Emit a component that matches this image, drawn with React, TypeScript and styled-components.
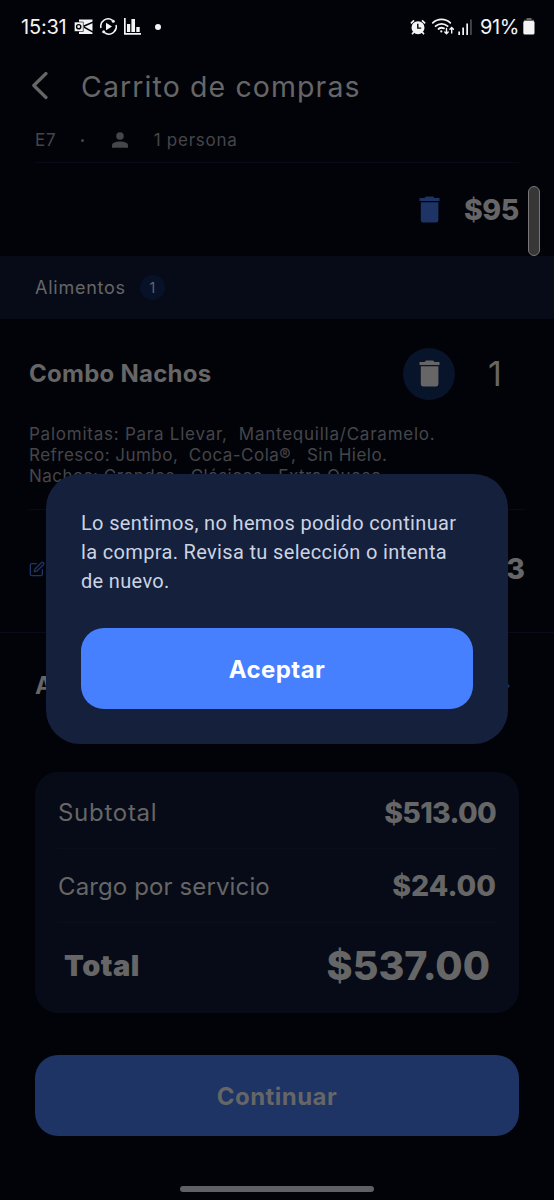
import React from 'react';
import styled, { createGlobalStyle } from 'styled-components';
import { FiEdit } from 'react-icons/fi';

const Global = createGlobalStyle`
  * { box-sizing: border-box; }
  body { margin: 0; background: #020309; overflow: hidden; }
  p, h1, h2 { margin: 0; font-weight: inherit; }
  button { border: 0; padding: 0; background: none; }
`;

const Screen = styled.div`
  position: relative;
  display: flex;
  flex-direction: column;
  width: 554px;
  height: 1200px;
  overflow: hidden;
  background: #020309;
  color: #666;
  font-family: Inter, sans-serif;
`;

const Text = styled.span<{
  $size: number;
  $weight?: number;
  $track?: number;
  $color?: string;
  $family?: string;
  $top?: number;
  $bottom?: number;
}>`
  flex: none;
  padding: ${(p) => p.$top ?? 0}px 0 ${(p) => p.$bottom ?? 0}px;
  white-space: pre;
  line-height: 1;
  font-size: ${(p) => p.$size}px;
  font-weight: ${(p) => p.$weight ?? 400};
  letter-spacing: ${(p) => p.$track ?? 0}px;
  color: ${(p) => p.$color ?? 'inherit'};
  font-family: ${(p) => p.$family ?? 'inherit'};
`;

const StatusBar = styled.header`
  display: flex;
  flex: none;
  align-items: center;
  justify-content: space-between;
  height: 53px;
  padding: 0 19px 0 21px;
  color: #f4f4f4;
`;

const StatusGroup = styled.div<{ $gap: number }>`
  display: flex;
  align-items: center;
  gap: ${(p) => p.$gap}px;
`;

const Dot = styled.i<{ $size: number; $color: string }>`
  width: ${(p) => p.$size}px;
  height: ${(p) => p.$size}px;
  border-radius: 50%;
  background: ${(p) => p.$color};
`;

const TitleBar = styled.div`
  display: flex;
  flex: none;
  align-items: center;
  gap: 32px;
  height: 66px;
  padding-left: 31px;
`;

const Details = styled.div`
  display: flex;
  flex: none;
  align-items: center;
  height: 44px;
  margin: 0 35px;
  border-bottom: 1px solid #070b18;
  color: #45464a;
`;

const Spacer = styled.i<{ $w: number }>`
  flex: none;
  width: ${(p) => p.$w}px;
`;

const PriceRow = styled.div`
  display: flex;
  flex: none;
  align-items: center;
  justify-content: flex-end;
  gap: 24px;
  height: 93px;
  padding-right: 35px;
`;

const Category = styled.div`
  display: flex;
  flex: none;
  align-items: center;
  gap: 14px;
  height: 63px;
  padding-left: 35px;
  background: #070b17;
`;

const Count = styled.div`
  display: grid;
  place-items: center;
  width: 25px;
  height: 25px;
  border-radius: 50%;
  background: #071228;
`;

const Product = styled.section`
  flex: none;
  height: 314px;
  padding: 0 29px;
  border-bottom: 1px solid #090b1a;
`;

const ProductHead = styled.div`
  display: flex;
  align-items: center;
  height: 109px;
`;

const RoundButton = styled.button`
  display: grid;
  place-items: center;
  width: 52px;
  height: 52px;
  margin-left: auto;
  border-radius: 50%;
  background: #08142a;
`;

const Quantity = styled.div`
  display: flex;
  justify-content: center;
  width: 70px;
  padding-left: 10px;
`;

const Description = styled.div`
  display: flex;
  flex-direction: column;
  height: 86px;
  margin-top: -4px;
  border-bottom: 1px solid #080a16;
`;

const DescLine = styled.div`
  display: flex;
  flex: none;
  align-items: center;
  height: 21px;
`;

const EditRow = styled.div`
  display: flex;
  align-items: center;
  justify-content: space-between;
  height: 118px;
`;

const AddRow = styled.div`
  display: flex;
  flex: none;
  align-items: center;
  justify-content: space-between;
  height: 107px;
  padding: 0 44px 2px 35px;
`;

const Summary = styled.section`
  flex: none;
  height: 241px;
  margin: 32px 35px 0;
  padding: 4px 23px 0;
  border-radius: 23px;
  background: #070b17;
`;

const SummaryRow = styled.div<{ $h: number; $inset?: number; $line?: boolean }>`
  display: flex;
  align-items: center;
  justify-content: space-between;
  height: ${(p) => p.$h}px;
  padding: 0 ${(p) => p.$inset ?? 0}px;
  border-bottom: ${(p) => (p.$line ? '1px solid #0a0f1d' : '0')};
`;

const PrimaryButton = styled.button<{ $bg: string; $fg: string }>`
  display: flex;
  flex: none;
  align-items: center;
  justify-content: center;
  height: 81px;
  border-radius: 23px;
  background: ${(p) => p.$bg};
  color: ${(p) => p.$fg};
  font-family: inherit;
`;

const Footer = styled.footer`
  display: flex;
  flex-direction: column;
  padding: 42px 35px 0;
`;

const HomeBar = styled.div`
  align-self: center;
  width: 194px;
  height: 6px;
  margin-top: 50.4px;
  border-radius: 3px;
  background: #5f6066;
`;

const ScrollThumb = styled.div`
  position: absolute;
  top: 186px;
  right: 14px;
  width: 12px;
  height: 70px;
  border: 1px solid #777;
  border-radius: 6px;
  background: #373737;
`;

const Dialog = styled.div`
  position: absolute;
  top: 474px;
  left: 46px;
  display: flex;
  flex-direction: column;
  width: 462px;
  height: 270px;
  padding: 35px;
  border-radius: 34px;
  background: #14203c;
`;

const Message = styled.div`
  display: flex;
  flex-direction: column;
  height: 120px;
`;

const MessageLine = styled.p`
  display: flex;
  align-items: center;
  height: 28.8px;
`;

const TrashIcon = ({ color }: { color: string }) => (
  <svg width="21" height="27" viewBox="0 0 21 27" fill={color}>
    <path d="M.5 2h5L7 .6h7L15.500 2h5v3H.500zM1.800 6.200h17.600v18A2.500 2.500 0 0 1 16.900 26.600H4.300a2.500 2.500 0 0 1-2.500-2.400z" />
  </svg>
);

const MailIcon = () => (
  <svg width="19" height="16" viewBox="0 0 19 16">
    <path d="M5 .5h13.500v14.500H5z" fill="#f4f4f4" />
    <path d="M9.500 7.200L19 3.200M10 8.200l9 5" stroke="#020309" strokeWidth="1.500" />
    <path d="M.3 3h9v9.500h-9z" fill="#f4f4f4" stroke="#020309" strokeWidth=".6" />
    <circle cx="4.700" cy="7.700" r="2.100" fill="none" stroke="#020309" strokeWidth="1.400" />
  </svg>
);

const PlayIcon = () => (
  <svg width="17" height="17" viewBox="0 0 17 17" fill="none" stroke="#f4f4f4" strokeWidth="1.500">
    <path d="M1 10A7.300 7.300 0 0 1 12.500 2.400M16 7A7.300 7.300 0 0 1 4.500 14.600" />
    <path d="M15.800 10.800A7.300 7.300 0 0 1 14.200 13.200" />
    <path d="M6 4.800v7.400l6-3.700z" fill="#f4f4f4" stroke="none" />
    <circle cx="13.300" cy="3.200" r="1.500" fill="#f4f4f4" stroke="none" />
    <circle cx="3.700" cy="13.800" r="1.500" fill="#f4f4f4" stroke="none" />
  </svg>
);

const ChartIcon = () => (
  <svg width="17" height="17" viewBox="0 0 17 17" fill="#f4f4f4">
    <path d="M0 0h1.700v15H17v1.800H0zM3 6h3.200v8H3zM7.400 1h3.600v13H7.400zM12.300 9h3.400v5h-3.400z" />
  </svg>
);

const AlarmIcon = () => (
  <svg width="16" height="16" viewBox="0 0 16 16" fill="none">
    <circle cx="8" cy="8.700" r="6.500" fill="#f4f4f4" />
    <path d="M.9 4.300L4 1.300M15.100 4.300L12 1.300M3.800 13l-1.700 2.300M12.200 13l1.700 2.300" stroke="#f4f4f4" strokeWidth="1.700" />
    <path d="M7.800 4.800v4.300h3.400" stroke="#020309" strokeWidth="1.400" />
  </svg>
);

const WifiIcon = () => (
  <svg width="24" height="17" viewBox="-2 0 24 17" fill="none" stroke="#f4f4f4" strokeWidth="1.800" strokeLinecap="round">
    <path d="M.8 4.800a13 13 0 0 1 17.500 0M3.600 8.200a9 9 0 0 1 12 0M6.500 11a5 5 0 0 1 5.500-.6" />
    <circle cx="9.300" cy="13.400" r="1.100" fill="#f4f4f4" stroke="none" />
    <path d="M14.500 10.500v5M12.800 14l1.700 1.800 1.700-1.800M19.700 15V10M18 11.300l1.700-1.800 1.700 1.800" strokeWidth="1.400" />
  </svg>
);

const SignalIcon = () => (
  <svg width="14" height="16" viewBox="0 0 14 16" fill="#f4f4f4">
    <path d="M.3 12.500H2V16H.3zM4.300 8.500H6V16H4.300zM8.300 4.500H10V16H8.300z" />
    <path d="M12.200.5h1.500V16h-1.500z" fill="#55565a" />
  </svg>
);

const BatteryIcon = () => (
  <svg width="12" height="17" viewBox="0 0 12 17">
    <path d="M3.500 0h5v1.800H11V4H1V1.800h2.500z" fill="#666" />
    <rect x=".3" y="3" width="11.200" height="13.500" rx="1.500" fill="#f4f4f4" />
  </svg>
);

const BackIcon = () => (
  <svg width="18" height="28" viewBox="0 0 18 28" fill="none" stroke="#666" strokeWidth="3.200" strokeLinecap="round" strokeLinejoin="round">
    <path d="M15 1.500L2.800 13.500 15 25.500" />
  </svg>
);

const PersonIcon = () => (
  <svg width="16" height="18" viewBox="0 0 16 18" fill="#45464a">
    <circle cx="8" cy="4" r="3.800" />
    <path d="M0 15.700v-2.400C0 10.700 4 9.500 8 9.500s8 1.200 8 3.800v2.400z" />
  </svg>
);

const ChevronIcon = () => (
  <svg width="9" height="16" viewBox="0 0 9 16" fill="none" stroke="#1d3465" strokeWidth="2">
    <path d="M1 1l6.500 7L1 15" />
  </svg>
);

const messageFont = 'Roboto, sans-serif';
const message = [
  'Lo sentimos, no hemos podido continuar',
  'la compra. Revisa tu selección o intenta',
  'de nuevo.',
];

const description = [
  { text: 'Palomitas: Para Llevar,  Mantequilla/Caramelo.', track: 0.76 },
  { text: 'Refresco: Jumbo,  Coca-Cola®,  Sin Hielo.', track: 0.48 },
  { text: 'Nachos: Grandes,  Clásicos,  Extra Queso.', track: 0.46 },
];

export default function App() {
  return (
    <Screen>
      <Global />
      <StatusBar>
        <StatusGroup $gap={7}>
          <Text $size={20} $track={-0.2}>15:31</Text>
          <MailIcon />
          <PlayIcon />
          <ChartIcon />
          <Spacer $w={0} />
          <Dot $size={6} $color="#f4f4f4" />
        </StatusGroup>
        <StatusGroup $gap={4}>
          <AlarmIcon />
          <WifiIcon />
          <SignalIcon />
          <Spacer $w={0} />
          <Text $size={20} $track={-0.4}>91%</Text>
          <BatteryIcon />
        </StatusGroup>
      </StatusBar>

      <TitleBar>
        <BackIcon />
        <Text as="h1" $size={28.5} $track={1.1} $top={2}>Carrito de compras</Text>
      </TitleBar>

      <Details>
        <Text $size={17} $track={0.9}>E7</Text>
        <Spacer $w={24} />
        <Dot $size={3} $color="#45464a" />
        <Spacer $w={28} />
        <PersonIcon />
        <Spacer $w={26} />
        <Text $size={17} $track={0.76}>1 persona</Text>
      </Details>

      <PriceRow>
        <TrashIcon color="#1d3465" />
        <Text $size={28.5} $weight={800} $track={-0.4} $top={2}>$95</Text>
      </PriceRow>

      <Category>
        <Text $size={18} $track={0.76} $top={1}>Alimentos</Text>
        <Count><Text $size={14}>1</Text></Count>
      </Category>

      <Product>
        <ProductHead>
          <Text as="h2" $size={24} $weight={700} $track={0.25}>Combo Nachos</Text>
          <RoundButton><TrashIcon color="#666" /></RoundButton>
          <Quantity><Text $size={34}>1</Text></Quantity>
        </ProductHead>
        <Description>
          {description.map((line) => (
            <DescLine key={line.text}>
              <Text $size={17} $color="#45464a" $track={line.track}>{line.text}</Text>
            </DescLine>
          ))}
        </Description>
        <EditRow>
          <FiEdit size={16} color="#1d3465" />
          <Text $size={28.5} $weight={800}>$513</Text>
        </EditRow>
      </Product>

      <AddRow>
        <Text $size={24} $weight={700}>Agregar</Text>
        <ChevronIcon />
      </AddRow>

      <Summary>
        <SummaryRow $h={73} $line>
          <Text $size={24} $track={0.72} $top={2}>Subtotal</Text>
          <Text $size={28.5} $weight={800} $track={-0.7} $top={2}>$513.00</Text>
        </SummaryRow>
        <SummaryRow $h={74} $line>
          <Text $size={24} $track={0.12} $top={2}>Cargo por servicio</Text>
          <Text $size={28.5} $weight={800} $top={2}>$24.00</Text>
        </SummaryRow>
        <SummaryRow $h={86} $inset={6}>
          <Text $size={29} $weight={900} $track={0.5} $bottom={1}>Total</Text>
          <Text $size={39.5} $weight={800} $top={2}>$537.00</Text>
        </SummaryRow>
      </Summary>

      <Footer>
        <PrimaryButton $bg="#1d3465" $fg="#666">
          <Text $size={24} $weight={700} $track={0.45} $top={2}>Continuar</Text>
        </PrimaryButton>
        <HomeBar />
      </Footer>

      <ScrollThumb />

      <Dialog role="dialog">
        <Message>
          {message.map((line) => (
            <MessageLine key={line}>
              <Text $size={20} $color="#ccd3e2" $family={messageFont} $track={0.34}>{line}</Text>
            </MessageLine>
          ))}
        </Message>
        <PrimaryButton $bg="#4780ff" $fg="#fff">
          <Text $size={24} $weight={700} $track={0.45} $top={2}>Aceptar</Text>
        </PrimaryButton>
      </Dialog>
    </Screen>
  );
}
